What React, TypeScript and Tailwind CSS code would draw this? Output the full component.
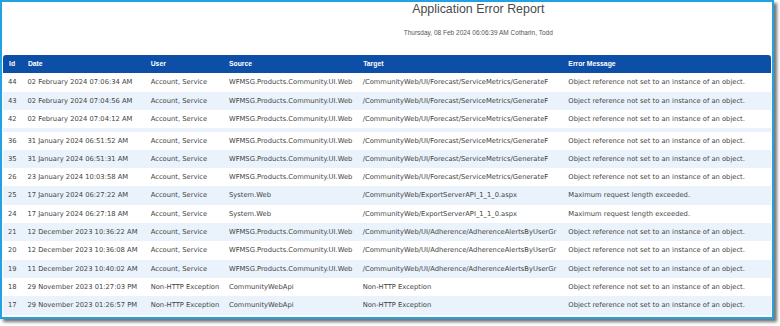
import React from 'react';

type Row = {
  id: string;
  date: string;
  user: string;
  source: string;
  target: string;
  message: string;
};

const FORECAST = '/CommunityWeb/UI/Forecast/ServiceMetrics/GenerateF';
const ADHERENCE = '/CommunityWeb/UI/Adherence/AdherenceAlertsByUserGr';
const EXPORT = '/CommunityWeb/ExportServerAPI_1_1_0.aspx';
const NULL_REF = 'Object reference not set to an instance of an object.';
const MAX_LEN = 'Maximum request length exceeded.';
const ACCOUNT = 'Account, Service';
const WFM = 'WFMSG.Products.Community.UI.Web';

const firstRows: Row[] = [
  { id: '44', date: '02 February 2024 07:06:34 AM', user: ACCOUNT, source: WFM, target: FORECAST, message: NULL_REF },
  { id: '43', date: '02 February 2024 07:04:56 AM', user: ACCOUNT, source: WFM, target: FORECAST, message: NULL_REF },
  { id: '42', date: '02 February 2024 07:04:12 AM', user: ACCOUNT, source: WFM, target: FORECAST, message: NULL_REF },
];

const restRows: Row[] = [
  { id: '36', date: '31 January 2024 06:51:52 AM', user: ACCOUNT, source: WFM, target: FORECAST, message: NULL_REF },
  { id: '35', date: '31 January 2024 06:51:31 AM', user: ACCOUNT, source: WFM, target: FORECAST, message: NULL_REF },
  { id: '26', date: '23 January 2024 10:03:58 AM', user: ACCOUNT, source: WFM, target: FORECAST, message: NULL_REF },
  { id: '25', date: '17 January 2024 06:27:22 AM', user: ACCOUNT, source: 'System.Web', target: EXPORT, message: MAX_LEN },
  { id: '24', date: '17 January 2024 06:27:18 AM', user: ACCOUNT, source: 'System.Web', target: EXPORT, message: MAX_LEN },
  { id: '21', date: '12 December 2023 10:36:22 AM', user: ACCOUNT, source: WFM, target: ADHERENCE, message: NULL_REF },
  { id: '20', date: '12 December 2023 10:36:08 AM', user: ACCOUNT, source: WFM, target: ADHERENCE, message: NULL_REF },
  { id: '19', date: '11 December 2023 10:40:02 AM', user: ACCOUNT, source: WFM, target: ADHERENCE, message: NULL_REF },
  { id: '18', date: '29 November 2023 01:27:03 PM', user: 'Non-HTTP Exception', source: 'CommunityWebApi', target: 'Non-HTTP Exception', message: NULL_REF },
  { id: '17', date: '29 November 2023 01:26:57 PM', user: 'Non-HTTP Exception', source: 'CommunityWebApi', target: 'Non-HTTP Exception', message: NULL_REF },
];

const cols = 'grid grid-cols-[20.4px_123.3px_78.3px_133.7px_205.7px_1fr]';

const TableRow = ({ row, shaded }: { row: Row; shaded: boolean }) => (
  <div
    className={`${cols} h-[18.3px] items-center whitespace-nowrap text-[6.75px] leading-[18.3px] text-[#444] ${
      shaded ? 'bg-[#eaf3fb]' : 'bg-white'
    }`}
    style={{ fontFamily: '"DejaVu Sans", Verdana, sans-serif' }}
  >
    <span className="pl-[5px]">{row.id}</span>
    <span className="pl-[4px]">{row.date}</span>
    <span className="pl-[4px]">{row.user}</span>
    <span className="pl-[4px]">{row.source}</span>
    <span className="overflow-hidden pl-[4px]">{row.target}</span>
    <span className="pl-[4px]">{row.message}</span>
  </div>
);

export default function App() {
  return (
    <div className="h-[326px] w-[780px] overflow-hidden bg-white">
      <div
        className="h-[318.5px] w-[773.5px] border-2 border-[#22a2e0] bg-white px-[1px] shadow-[3px_3px_3px_rgba(0,0,0,0.55)]"
        style={{ fontFamily: '"Liberation Sans", Arial, sans-serif' }}
      >
        {/* Titre du rapport */}
        <div className="pl-[183px] text-center">
          <h1 className="text-[12.4px] leading-[14px] text-[#4a4a4a]">Application Error Report</h1>
          <p className="mt-[12.75px] text-[6.5px] leading-[8px] text-[#555]">
            Thursday, 08 Feb 2024 06:06:39 AM Cotharin, Todd
          </p>
        </div>

        {/* Tableau */}
        <div className="mt-[18.25px]">
          <div
            className={`${cols} h-[18.3px] items-center rounded-t-[3px] bg-[#0d4ea6] text-[6.8px] leading-[18.3px] font-bold text-white`}
          >
            <span className="pl-[6px]">Id</span>
            <span className="pl-[4.5px]">Date</span>
            <span className="pl-[4px]">User</span>
            <span className="pl-[4px]">Source</span>
            <span className="pl-[4.5px]">Target</span>
            <span className="pl-[4px]">Error Message</span>
          </div>
          {firstRows.map((row, i) => (
            <TableRow key={row.id} row={row} shaded={i % 2 === 1} />
          ))}
          <div className="h-[3.4px] bg-[#eaf3fb]" />
          {restRows.map((row, i) => (
            <TableRow key={row.id} row={row} shaded={i % 2 === 1} />
          ))}
        </div>
      </div>
    </div>
  );
}
